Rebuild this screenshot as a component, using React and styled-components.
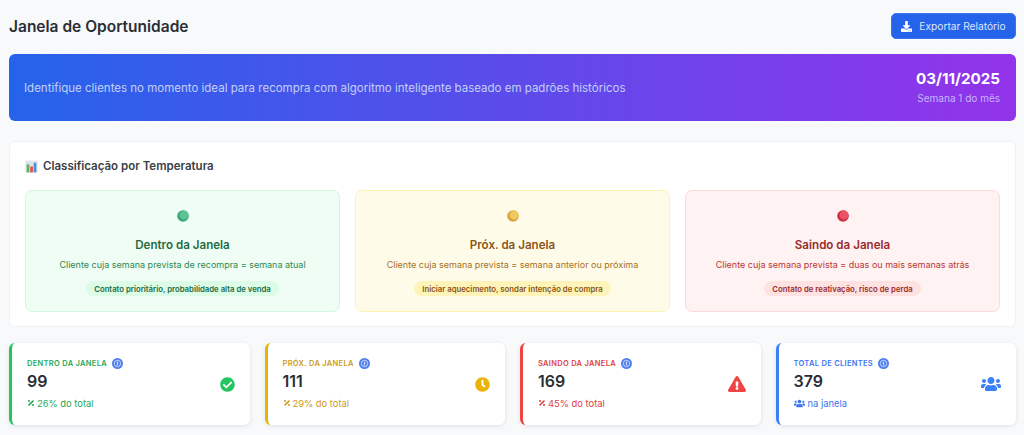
import React from 'react'
import styled, { createGlobalStyle } from 'styled-components'
import { FaDownload, FaCheckCircle, FaClock, FaExclamationTriangle, FaUsers, FaPercentage } from 'react-icons/fa'

const GlobalStyle = createGlobalStyle`
  html, body {
    margin: 0;
    padding: 0;
    background: #f8f9fb;
    font-family: Inter, "Liberation Sans", sans-serif;
    overflow: hidden;
  }
  * { box-sizing: border-box; }
`

const tones = {
  green: { bg: '#f0fdf4', border: '#d0f8de', title: '#1f6b3f', text: '#2a8a52', pill: '#dcfce7', stat: '#22c55e', label: '#27a85a', ball: '#5cc596', dark: '#3aa878' },
  yellow: { bg: '#fefce8', border: '#fef3b0', title: '#8a5519', text: '#a96f1a', pill: '#fef3b8', stat: '#eab308', label: '#cf9a20', ball: '#eeca5c', dark: '#d9a441' },
  red: { bg: '#fef2f2', border: '#fddada', title: '#9c2a2a', text: '#bd3535', pill: '#fee2e2', stat: '#ef4444', label: '#e04343', ball: '#ea5463', dark: '#cf3044' },
  blue: { stat: '#3b82f6', label: '#3b76ee' },
}

const Page = styled.div`
  width: 1024px;
  height: 435px;
  padding: 13px 8px 0 9px;
  display: flex;
  flex-direction: column;
  overflow: hidden;
`

const Header = styled.header`
  display: flex;
  justify-content: space-between;
  align-items: center;
  height: 26px;
  margin-bottom: 15px;
`

const Title = styled.h1`
  margin: 0;
  font-size: 15.5px;
  font-weight: 600;
  color: #2a2f35;
`

const ExportButton = styled.button`
  width: 125px;
  height: 26px;
  display: flex;
  align-items: center;
  justify-content: center;
  gap: 7px;
  border: 1px solid #3b76ee;
  border-radius: 5px;
  background: #2563eb;
  color: #dbe6fd;
  font-family: inherit;
  font-size: 10.2px;
  padding: 0;
`

const Banner = styled.section`
  height: 67px;
  display: flex;
  justify-content: space-between;
  align-items: center;
  padding: 0 16px 0 15px;
  border-radius: 6px;
  background: linear-gradient(90deg, #2563eb, #9333ea);
  margin-bottom: 20px;
`

const BannerText = styled.p`
  margin: 0;
  font-size: 11.5px;
  color: #c3d0f8;
`

const DateBox = styled.div`
  text-align: right;
  padding-bottom: 2px;
`

const DateValue = styled.div`
  font-size: 15.2px;
  font-weight: 700;
  line-height: 20px;
  margin-bottom: 2px;
  color: #fff;
`

const DateHint = styled.div`
  font-size: 10px;
  line-height: 14px;
  color: #c4b5fd;
`

const Panel = styled.section`
  height: 186px;
  padding: 15px;
  background: #fff;
  border: 1px solid #f0f1f4;
  border-radius: 6px;
  margin-bottom: 16px;
`

const PanelTitle = styled.h2`
  margin: 0 0 15px;
  height: 18px;
  display: flex;
  align-items: center;
  gap: 5px;
  font-size: 11.5px;
  font-weight: 600;
  color: #3a4047;
`

const TempGrid = styled.div`
  display: grid;
  grid-template-columns: repeat(3, 315px);
  justify-content: space-between;
`

const TempCard = styled.div`
  height: 122px;
  display: flex;
  flex-direction: column;
  align-items: center;
  padding-top: 19px;
  border-radius: 7px;
  border: 1px solid ${p => tones[p.$tone].border};
  background: ${p => tones[p.$tone].bg};
`

const TempTitle = styled.h3`
  margin: 15px 0 0;
  font-size: 11.6px;
  line-height: 16px;
  font-weight: 600;
  color: ${p => tones[p.$tone].title};
`

const TempText = styled.p`
  margin: 5px 0 0;
  font-size: 9px;
  line-height: 14px;
  color: ${p => tones[p.$tone].text};
`

const TempPill = styled.span`
  margin-top: 9px;
  height: 15px;
  display: flex;
  align-items: center;
  padding: 0 8px;
  border-radius: 8px;
  font-size: 7.75px;
  font-weight: 600;
  color: ${p => tones[p.$tone].title};
  background: ${p => tones[p.$tone].pill};
`

const StatGrid = styled.div`
  display: grid;
  grid-template-columns: repeat(4, 1fr);
  gap: 15px;
`

const StatCard = styled.div`
  height: 82px;
  display: flex;
  justify-content: space-between;
  align-items: center;
  padding: 0 15px 0 15px;
  background: #fff;
  border-radius: 6px;
  border-left: 3px solid ${p => tones[p.$tone].stat};
  box-shadow: 0 1px 4px rgba(0, 0, 0, 0.1);
`

const StatBody = styled.div`
  display: flex;
  flex-direction: column;
  padding-bottom: 2px;
`

const StatLabel = styled.div`
  display: flex;
  align-items: center;
  gap: 5px;
  height: 12px;
  font-size: 7.5px;
  font-weight: 600;
  letter-spacing: 0.3px;
  text-transform: uppercase;
  color: ${p => tones[p.$tone].label};
`

const StatValue = styled.div`
  margin-top: 2px;
  font-size: 16px;
  line-height: 20px;
  font-weight: 600;
  color: #2a2f35;
`

const StatNote = styled.div`
  margin-top: 6px;
  display: flex;
  align-items: center;
  gap: ${p => (p.$tone === 'blue' ? 3 : 2)}px;
  height: 12px;
  font-size: 9.4px;
  color: ${p => tones[p.$tone].label};
`

const StatIcon = styled.div`
  display: flex;
  font-size: ${p => p.$size || 15}px;
  color: ${p => tones[p.$tone].stat};
`

// little chart emoji next to the panel title
const ChartEmoji = () => (
  <svg width="13" height="13" viewBox="0 0 12 12">
    <rect x="0.5" y="0.5" width="11" height="11" fill="#dfe5e8" />
    <rect x="1.5" y="4" width="2.5" height="7.5" fill="#5fb35f" />
    <rect x="4.8" y="6" width="2.5" height="5.5" fill="#e0524f" />
    <rect x="8" y="2.5" width="2.5" height="9" fill="#4a90d9" />
  </svg>
)

const Ball = ({ tone }) => (
  <svg width="12" height="12" viewBox="0 0 12 12">
    <circle cx="6" cy="6" r="5.8" fill={tones[tone].dark} />
    <circle cx="7" cy="5" r="4.4" fill={tones[tone].ball} />
  </svg>
)

const InfoBadge = () => (
  <svg width="11" height="11" viewBox="0 0 11 11">
    <circle cx="5.5" cy="5.5" r="5.5" fill="#4f7fec" />
    <circle cx="5.5" cy="5.5" r="3.2" fill="none" stroke="#cfdcfb" strokeWidth="0.9" />
    <rect x="4.9" y="3.6" width="1.2" height="3.8" fill="#cfdcfb" />
  </svg>
)

const temps = [
  { tone: 'green', title: 'Dentro da Janela', text: 'Cliente cuja semana prevista de recompra = semana atual', pill: 'Contato prioritário, probabilidade alta de venda' },
  { tone: 'yellow', title: 'Próx. da Janela', text: 'Cliente cuja semana prevista = semana anterior ou próxima', pill: 'Iniciar aquecimento, sondar intenção de compra' },
  { tone: 'red', title: 'Saindo da Janela', text: 'Cliente cuja semana prevista = duas ou mais semanas atrás', pill: 'Contato de reativação, risco de perda' },
]

const stats = [
  { tone: 'green', label: 'Dentro da Janela', value: 99, note: '26% do total', Icon: FaCheckCircle, NoteIcon: FaPercentage },
  { tone: 'yellow', label: 'Próx. da Janela', value: 111, note: '29% do total', Icon: FaClock, NoteIcon: FaPercentage },
  { tone: 'red', label: 'Saindo da Janela', value: 169, note: '45% do total', Icon: FaExclamationTriangle, NoteIcon: FaPercentage, size: 18 },
  { tone: 'blue', label: 'Total de Clientes', value: 379, note: 'na janela', Icon: FaUsers, NoteIcon: FaUsers, size: 20 },
]

export default function App() {
  return (
    <Page>
      <GlobalStyle />
      <Header>
        <Title>Janela de Oportunidade</Title>
        <ExportButton><FaDownload size={11} color="#fff" />Exportar Relatório</ExportButton>
      </Header>
      <Banner>
        <BannerText>Identifique clientes no momento ideal para recompra com algoritmo inteligente baseado em padrões históricos</BannerText>
        <DateBox>
          <DateValue>03/11/2025</DateValue>
          <DateHint>Semana 1 do mês</DateHint>
        </DateBox>
      </Banner>
      <Panel>
        <PanelTitle><ChartEmoji />Classificação por Temperatura</PanelTitle>
        <TempGrid>
          {temps.map(t => (
            <TempCard key={t.tone} $tone={t.tone}>
              <Ball tone={t.tone} />
              <TempTitle $tone={t.tone}>{t.title}</TempTitle>
              <TempText $tone={t.tone}>{t.text}</TempText>
              <TempPill $tone={t.tone}>{t.pill}</TempPill>
            </TempCard>
          ))}
        </TempGrid>
      </Panel>
      <StatGrid>
        {stats.map(s => (
          <StatCard key={s.label} $tone={s.tone}>
            <StatBody>
              <StatLabel $tone={s.tone}>{s.label}<InfoBadge /></StatLabel>
              <StatValue>{s.value}</StatValue>
              <StatNote $tone={s.tone}><s.NoteIcon size={s.tone === 'blue' ? 11 : 8} />{s.note}</StatNote>
            </StatBody>
            <StatIcon $tone={s.tone} $size={s.size}><s.Icon /></StatIcon>
          </StatCard>
        ))}
      </StatGrid>
    </Page>
  )
}
